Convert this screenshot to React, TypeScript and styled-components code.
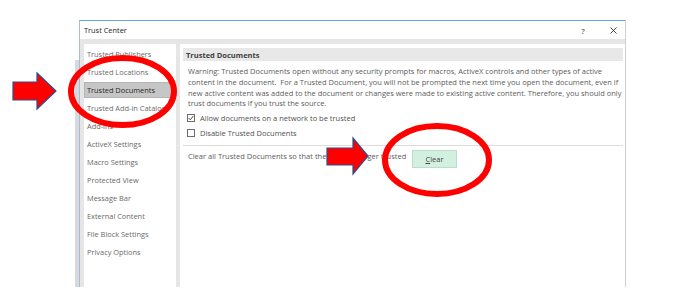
import React from "react"
import styled, { createGlobalStyle } from "styled-components"

const GlobalStyle = createGlobalStyle`
  html, body {
    margin: 0;
    padding: 0;
    background: #ffffff;
  }
  body {
    font-family: "Open Sans", "Noto Sans", sans-serif;
    color: #444;
  }
`

const navItems = [
  "Trusted Publishers",
  "Trusted Locations",
  "Trusted Documents",
  "Trusted Add-in Catalogs",
  "Add-ins",
  "ActiveX Settings",
  "Macro Settings",
  "Protected View",
  "Message Bar",
  "External Content",
  "File Block Settings",
  "Privacy Options",
]

const warningLines = [
  "Warning: Trusted Documents open without any security prompts for macros, ActiveX controls and other types of active",
  "content in the document.  For a Trusted Document, you will not be prompted the next time you open the document, even if",
  "new active content was added to the document or changes were made to existing active content. Therefore, you should only",
  "trust documents if you trust the source.",
]

const Stage = styled.div`
  position: relative;
  width: 674px;
  height: 302px;
  overflow: hidden;
  padding: 20px 0 0 75px;
  box-sizing: border-box;
  display: flex;
`

const ShadowStrip = styled.div`
  width: 4px;
  margin-top: 40px;
  height: 227px;
  background: #d9d9d9;
`

const Dialog = styled.div`
  width: 547px;
  height: 267px;
  box-sizing: border-box;
  border-top: 1px solid #6aa8e2;
  border-left: 1px solid #9fc0df;
  border-right: 1px solid #d0d0d0;
  display: flex;
  flex-direction: column;
  background: #fff;
`

const TitleBar = styled.div`
  height: 18px;
  display: flex;
  align-items: center;
  padding: 0 2px 0 4px;
  flex-shrink: 0;
`

const Title = styled.span`
  font-size: 7.4px;
  color: #222;
  flex: 1;
`

const TitleButton = styled.span<{ $gap?: number }>`
  width: 20px;
  margin-right: ${(p) => p.$gap ?? 0}px;
  display: flex;
  justify-content: center;
  align-items: center;
  font-size: 8px;
  color: #333;
`

const Body = styled.div`
  flex: 1;
  display: flex;
  gap: 4px;
  background: #e6e6e6;
  padding: 5px 0 0 4px;
  min-height: 0;
`

const Nav = styled.div`
  width: 92px;
  background: #fff;
  padding-top: 2px;
  flex-shrink: 0;
`

const NavItem = styled.div<{ $active?: boolean }>`
  height: 16px;
  margin: 0 3px 2px 0;
  padding-left: 2px;
  box-sizing: border-box;
  display: flex;
  align-items: center;
  font-size: 7.4px;
  white-space: nowrap;
  overflow: hidden;
  color: ${(p) => (p.$active ? "#262626" : "#6a6a6a")};
  background: ${(p) => (p.$active ? "#c6c6c6" : "transparent")};
  border: 1px solid ${(p) => (p.$active ? "#b4b4b4" : "transparent")};
`

const Content = styled.div`
  flex: 1;
  background: #fff;
  padding: 4px 2px 0 3px;
`

const SectionHeading = styled.div`
  height: 13px;
  background: #e8e8e8;
  padding-left: 3px;
  display: flex;
  align-items: center;
  font-size: 7.5px;
  font-weight: 700;
  color: #404040;
`

const Section = styled.div`
  padding-left: 5px;
`

const Warning = styled.div`
  margin-top: 5px;
  font-size: 7.5px;
  line-height: 10.8px;
  color: #5c5c5c;
  white-space: pre;
`

const CheckRow = styled.label`
  height: 15px;
  display: flex;
  align-items: center;
  gap: 5px;
  margin-left: -1px;
  font-size: 7.5px;
  color: #505050;
  &:first-of-type {
    margin-top: 1.5px;
  }
`

const Box = styled.span`
  width: 8px;
  height: 8px;
  box-sizing: border-box;
  border: 1px solid #6e6e6e;
  background: #fff;
  display: flex;
  align-items: center;
  justify-content: center;
`

const Separator = styled.div`
  height: 1px;
  background: #dcdcdc;
  margin: 4.5px 0 4px;
`

const ClearRow = styled.div`
  display: flex;
  align-items: flex-start;
`

const ClearLabel = styled.span`
  width: 224px;
  line-height: 12px;
  font-size: 7.5px;
  color: #5c5c5c;
  white-space: nowrap;
`

const ClearButton = styled.button`
  width: 45px;
  height: 18px;
  padding: 0;
  border: 1px solid #b9dfc9;
  background: #d3efdf;
  font-family: inherit;
  font-size: 7.5px;
  color: #444;
  u {
    text-decoration: underline;
  }
`

const Overlay = styled.svg`
  position: absolute;
  left: 0;
  top: 0;
  pointer-events: none;
`

function Checkbox({ checked }: { checked?: boolean }) {
  return (
    <Box>
      {checked && (
        <svg width="6" height="6" viewBox="0 0 6 6">
          <path d="M0.6 3.1 L2.3 4.8 L5.4 0.9" fill="none" stroke="#333" strokeWidth="0.9" />
        </svg>
      )}
    </Box>
  )
}

export default function App() {
  return (
    <>
      <GlobalStyle />
      <Stage>
        <ShadowStrip />
        <Dialog>
          <TitleBar>
            <Title>Trust Center</Title>
            <TitleButton $gap={10}>?</TitleButton>
            <TitleButton>
              <svg width="7" height="7" viewBox="0 0 7 7">
                <path d="M0.5 0.5 L6.5 6.5 M6.5 0.5 L0.5 6.5" stroke="#333" strokeWidth="0.9" />
              </svg>
            </TitleButton>
          </TitleBar>
          <Body>
            <Nav>
              {navItems.map((item) => (
                <NavItem key={item} $active={item === "Trusted Documents"}>
                  {item}
                </NavItem>
              ))}
            </Nav>
            <Content>
              <SectionHeading>Trusted Documents</SectionHeading>
              <Section>
                <Warning>
                  {warningLines.map((line) => (
                    <div key={line}>{line}</div>
                  ))}
                </Warning>
                <CheckRow>
                  <Checkbox checked />
                  Allow documents on a network to be trusted
                </CheckRow>
                <CheckRow>
                  <Checkbox />
                  Disable Trusted Documents
                </CheckRow>
              </Section>
              <Separator />
              <Section>
                <ClearRow>
                  <ClearLabel>Clear all Trusted Documents so that they are no longer trusted</ClearLabel>
                  <ClearButton>
                    <u>C</u>lear
                  </ClearButton>
                </ClearRow>
              </Section>
            </Content>
          </Body>
        </Dialog>
        <Overlay width="674" height="302" viewBox="0 0 674 302">
          <ellipse cx="122.5" cy="91.5" rx="51.5" ry="33.5" fill="none" stroke="#ff0000" strokeWidth="6" />
          <ellipse cx="437" cy="160" rx="52" ry="34" fill="none" stroke="#ff0000" strokeWidth="6" />
          <polygon
            points="13,82 37,82 37,73 56,91 37,109 37,100 13,100"
            fill="#ff0000"
            stroke="#2e4f8f"
            strokeWidth="1.2"
          />
          <polygon
            points="327,148 353,148 353,138 368,156 353,174 353,165 327,165"
            fill="#ff0000"
            stroke="#2e4f8f"
            strokeWidth="1.2"
          />
        </Overlay>
      </Stage>
    </>
  )
}
